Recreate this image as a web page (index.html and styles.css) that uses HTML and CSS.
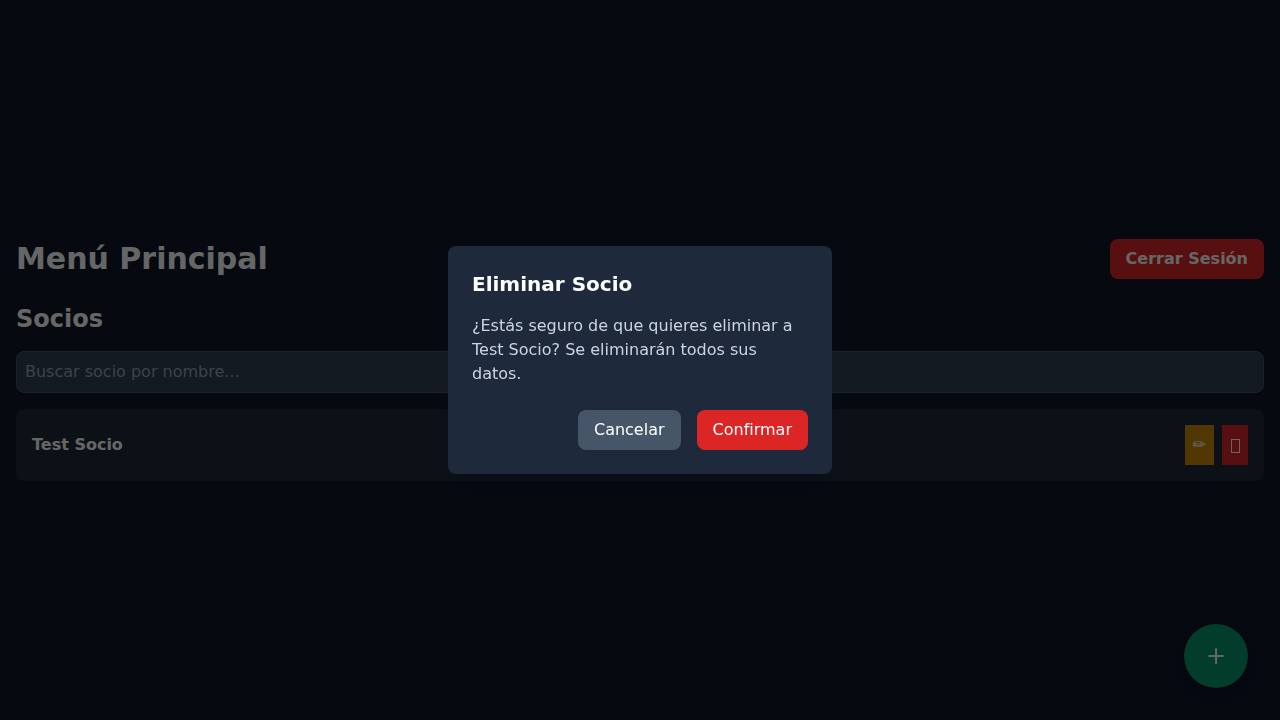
FILE: index.html
```html
<!DOCTYPE html>
<html lang="es">
<head>
<meta charset="utf-8">
<meta name="viewport" content="width=device-width, initial-scale=1">
<title>Menú Principal</title>
<link rel="stylesheet" href="styles.css">
</head>
<body>
<main class="page">
  <header class="page-header">
    <h1 class="page-title">Menú Principal</h1>
    <button type="button" class="btn btn-danger btn-bold">Cerrar Sesión</button>
  </header>
  <section class="members">
    <h2 class="members-title">Socios</h2>
    <input class="search" type="text" placeholder="Buscar socio por nombre..." aria-label="Buscar socio por nombre">
    <ul class="member-list">
      <li class="member">
        <span class="member-name">Test Socio</span>
        <div class="member-actions">
          <button type="button" class="icon-btn icon-btn-edit" aria-label="Editar">✏</button>
          <button type="button" class="icon-btn icon-btn-delete" aria-label="Eliminar">
            <svg class="icon" width="10" height="24" viewBox="0 0 10 24" fill="none" stroke="currentColor" aria-hidden="true"><rect x="1.5" y="6.5" width="8" height="13"/></svg>
          </button>
        </div>
      </li>
    </ul>
  </section>
</main>
<button type="button" class="fab" aria-label="Añadir socio">+</button>
<div class="overlay">
  <div class="modal" role="dialog" aria-modal="true" aria-labelledby="modal-title">
    <h3 class="modal-title" id="modal-title">Eliminar Socio</h3>
    <p class="modal-text">¿Estás seguro de que quieres eliminar a Test Socio? Se eliminarán todos sus datos.</p>
    <div class="modal-actions">
      <button type="button" class="btn btn-muted">Cancelar</button>
      <button type="button" class="btn btn-danger">Confirmar</button>
    </div>
  </div>
</div>
</body>
</html>
```

FILE: styles.css
```css
* {
  box-sizing: border-box;
  margin: 0;
  padding: 0;
}

body {
  min-height: 100vh;
  display: flex;
  flex-direction: column;
  justify-content: center;
  background: #0f172a;
  color: #fff;
  font-family: "DejaVu Sans", sans-serif;
  font-size: 16px;
  line-height: 24px;
}

button,
input {
  font: inherit;
  color: inherit;
  border: 0;
}

button {
  cursor: pointer;
}

.page {
  padding: 16px;
}

.page-header {
  display: flex;
  align-items: center;
  justify-content: space-between;
  margin-bottom: 24px;
}

.page-title {
  font-size: 30px;
  line-height: 36px;
}

.btn {
  padding: 8px 16px;
  border-radius: 8px;
}

.btn-danger {
  background: #dc2626;
}

.btn-muted {
  background: #475569;
}

.btn-bold {
  font-weight: 700;
}

.members-title {
  margin-bottom: 16px;
  font-size: 24px;
  line-height: 32px;
}

.search {
  display: block;
  width: 100%;
  margin-bottom: 16px;
  padding: 8px;
  border: 1px solid #475569;
  border-radius: 8px;
  background: #334155;
}

.search::placeholder {
  color: #9ca3af;
  opacity: 1;
}

.member-list {
  list-style: none;
}

.member {
  display: flex;
  align-items: center;
  justify-content: space-between;
  padding: 16px;
  border-radius: 8px;
  background: #1e293b;
}

.member-name {
  font-weight: 700;
}

.member-actions {
  display: flex;
  gap: 8px;
}

.icon-btn {
  padding: 8px;
}

.icon-btn-edit {
  background: #ca8a04;
}

.icon-btn-delete {
  background: #dc2626;
}

.icon {
  display: block;
}

.fab {
  position: fixed;
  right: 32px;
  bottom: 32px;
  width: 64px;
  height: 64px;
  border-radius: 50%;
  background: #059669;
  font-size: 24px;
  line-height: 32px;
  box-shadow: 0 10px 15px -3px rgba(0, 0, 0, 0.1), 0 4px 6px -4px rgba(0, 0, 0, 0.1);
}

.overlay {
  position: fixed;
  inset: 0;
  display: flex;
  align-items: center;
  justify-content: center;
  background: rgba(0, 0, 0, 0.6);
}

.modal {
  width: 100%;
  max-width: 384px;
  padding: 24px;
  border-radius: 8px;
  background: #1e293b;
  box-shadow: 0 20px 25px -5px rgba(0, 0, 0, 0.1), 0 8px 10px -6px rgba(0, 0, 0, 0.1);
}

.modal-title {
  margin-bottom: 16px;
  font-size: 20px;
  line-height: 28px;
}

.modal-text {
  margin-bottom: 24px;
  color: #cbd5e1;
}

.modal-actions {
  display: flex;
  justify-content: flex-end;
  gap: 16px;
}
```
